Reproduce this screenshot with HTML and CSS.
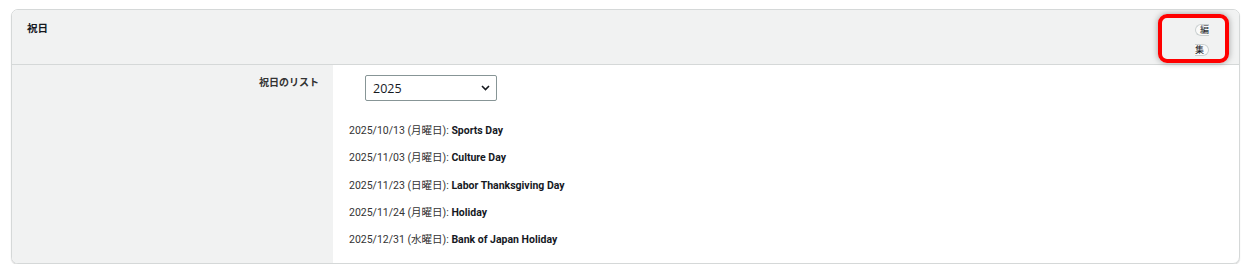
FILE: index.html
```html
<!DOCTYPE html>
<html lang="ja">

<head>
    <meta charset="UTF-8">
    <meta name="viewport" content="width=device-width, initial-scale=1.0">
    <title>祝日</title>
    <link rel="stylesheet" href="styles.css">
</head>

<body>
    <div class="card">
        <!-- ヘッダー -->
        <div class="card-header">
            <h2 class="card-title">祝日</h2>
            <div class="actions">
                <div class="edit-wrap"><span class="edit-btn">編集</span></div>
            </div>
        </div>

        <!-- 本文 -->
        <div class="card-body">
            <div class="field-label">祝日のリスト</div>
            <div class="field-value">
                <div class="select-box">
                    <select class="year-select">
                        <option>2025</option>
                        <option>2026</option>
                    </select>
                    <svg class="chevron" width="9" height="6" viewBox="0 0 9 6">
                        <path d="M1 1 L4.5 4.5 L8 1" fill="none" stroke="#16191f" stroke-width="1.6" />
                    </svg>
                </div>
                <ul class="holidays">
                    <li>2025/10/13 (月曜日): <b>Sports Day</b></li>
                    <li>2025/11/03 (月曜日): <b>Culture Day</b></li>
                    <li>2025/11/23 (日曜日): <b>Labor Thanksgiving Day</b></li>
                    <li>2025/11/24 (月曜日): <b>Holiday</b></li>
                    <li>2025/12/31 (水曜日): <b>Bank of Japan Holiday</b></li>
                </ul>
            </div>
        </div>
    </div>
</body>

</html>
```

FILE: styles.css
```css
body {
    margin: 0;
    padding: 9px 11px 0 11px;
    font-family: Roboto, "Noto Sans CJK JP", sans-serif;
    color: #16191f;
    background-color: #fff;
}

.card {
    border: 1px solid #d5d8d8;
    border-radius: 7px;
    box-shadow: 0 1px 1px rgba(0, 0, 0, 0.18);
    overflow: hidden;
}

.card-header {
    display: flex;
    justify-content: space-between;
    align-items: flex-start;
    background-color: #f1f2f2;
    border-bottom: 1px solid #d5d8d8;
    padding: 4px 10px 1px 15px;
}

.card-title {
    margin: 7px 0 0;
    font-size: 10.5px;
    line-height: 16px;
    font-weight: bold;
}

.actions {
    width: 71px;
    height: 49px;
    box-sizing: border-box;
    border: 4px solid #ff0000;
    border-radius: 9px;
    box-shadow: 0 0 6px rgba(0, 0, 0, 0.35);
    display: flex;
    justify-content: flex-end;
    padding: 1px 16px 0 0;
}

.edit-wrap {
    width: 16px;
    text-align: right;
    line-height: 18px;
}

.edit-btn {
    font-size: 9px;
    border: 1px solid #c9cfcf;
    border-radius: 8px;
    padding: 0 4px;
    background-color: #fafafa;
}

.card-body {
    display: flex;
}

.field-label {
    width: 307px;
    flex-shrink: 0;
    background-color: #f1f2f2;
    text-align: right;
    padding: 10px 14px 0 0;
    font-size: 10px;
    line-height: 16px;
    font-weight: bold;
    color: #333;
}

.field-value {
    flex: 1;
    padding: 10px 16px 15px 16px;
}

.select-box {
    position: relative;
    width: 132px;
    margin-left: 16px;
}

.year-select {
    appearance: none;
    width: 132px;
    height: 26px;
    border: 1px solid #879596;
    border-radius: 2px;
    background-color: #fff;
    font-family: "Open Sans", sans-serif;
    font-size: 12.5px;
    color: #16191f;
    padding: 0 7px;
}

.chevron {
    position: absolute;
    right: 7px;
    top: 10px;
    pointer-events: none;
}

.holidays {
    list-style: none;
    margin: 22px 0 0;
    padding: 0;
}

.holidays li {
    font-size: 10.5px;
    line-height: 16px;
    margin-bottom: 11.3px;
    color: #333;
}

.holidays li:last-child {
    margin-bottom: 0;
}

.holidays b {
    color: #16191f;
}
```
